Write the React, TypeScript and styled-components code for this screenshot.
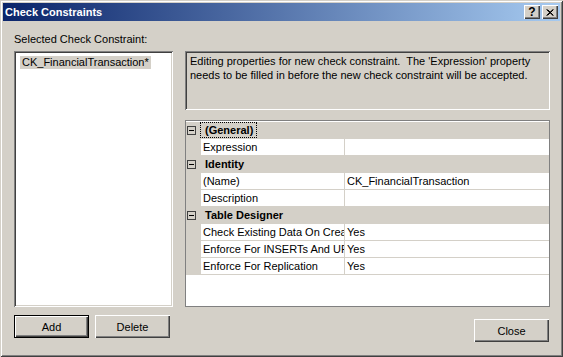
import React from "react";
import styled, { createGlobalStyle } from "styled-components";

const Global = createGlobalStyle`
  html, body { margin: 0; padding: 0; background: #D4D0C8; }
  body {
    font-family: "Liberation Sans", Arial, sans-serif;
    font-size: 11px;
    color: #000;
  }
  * { box-sizing: border-box; }
`;

const Window = styled.div`
  width: 563px;
  height: 357px;
  padding: 3px;
  background: #d4d0c8;
  display: flex;
  flex-direction: column;
  box-shadow: inset 1px 1px 0 #d4d0c8, inset -1px -1px 0 #404040,
    inset 2px 2px 0 #ffffff, inset -2px -2px 0 #808080;
`;

const TitleBar = styled.div`
  height: 18px;
  display: flex;
  align-items: center;
  padding: 0 2px 0 2px;
  background: linear-gradient(to right, #0a246a 0%, #a6caf0 100%);
`;

const TitleText = styled.div`
  flex: 1;
  color: #fff;
  font-weight: bold;
  font-size: 11px;
  line-height: 18px;
`;

const CaptionButtons = styled.div`
  display: flex;
  gap: 2px;
`;

const CaptionButton = styled.div`
  width: 16px;
  height: 14px;
  background: #d4d0c8;
  display: flex;
  align-items: center;
  justify-content: center;
  font-weight: bold;
  font-size: 12px;
  line-height: 14px;
  box-shadow: inset 1px 1px 0 #ffffff, inset -1px -1px 0 #404040,
    inset -2px -2px 0 #808080;
`;

const Body = styled.div`
  flex: 1;
  display: flex;
  padding-left: 11px;
`;

const LeftCol = styled.div`
  width: 159px;
  display: flex;
  flex-direction: column;
`;

const Label = styled.div`
  margin-top: 12px;
  line-height: 13px;
  padding-left: 0;
`;

const sunken = `
  box-shadow: inset 1px 1px 0 #808080, inset -1px -1px 0 #ffffff,
    inset 2px 2px 0 #404040, inset -2px -2px 0 #d4d0c8;
`;

const ListBox = styled.div`
  margin-top: 5px;
  height: 256px;
  background: #fff;
  padding: 5px 4px 0 6px;
  ${sunken}
`;

const ListItem = styled.span<{ $selected?: boolean }>`
  display: inline-block;
  line-height: 13px;
  padding: 0 2px;
  background: ${(p) => (p.$selected ? "#d4d0c8" : "transparent")};
`;

const ButtonRow = styled.div`
  margin-top: 8px;
  display: flex;
  gap: 6px;
`;

const Button = styled.button<{ $default?: boolean }>`
  width: 75px;
  height: 23px;
  border: none;
  padding: 0;
  background: #d4d0c8;
  font-family: "Liberation Sans", Arial, sans-serif;
  font-size: 11px;
  color: #000;
  box-shadow: ${(p) =>
    p.$default
      ? "inset 0 0 0 1px #000, inset 2px 2px 0 #ffffff, inset -2px -2px 0 #404040, inset -3px -3px 0 #808080"
      : "inset 1px 1px 0 #ffffff, inset -1px -1px 0 #404040, inset -2px -2px 0 #808080"};
`;

const RightCol = styled.div`
  margin-left: 12px;
  width: 365px;
  display: flex;
  flex-direction: column;
  padding-top: 30px;
`;

const Description = styled.div`
  height: 59px;
  padding: 3px 5px;
  line-height: 14px;
  background: #d4d0c8;
  ${sunken}
`;

const Grid = styled.div`
  margin-top: 10px;
  height: 187px;
  border: 1px solid #808080;
  background: #fff;
  padding-top: 1px;
  display: flex;
  flex-direction: column;
`;

const CategoryRow = styled.div`
  height: 17px;
  display: flex;
  align-items: center;
  background: #d4d0c8;
  border-bottom: 1px solid #d4d0c8;
`;

const Expander = styled.div`
  width: 14px;
  height: 16px;
  display: flex;
  align-items: center;
  padding-left: 1px;
`;

const ExpandBox = styled.div`
  width: 9px;
  height: 9px;
  border: 1px solid #404040;
  display: flex;
  align-items: center;
  justify-content: center;
  &::after {
    content: "";
    width: 5px;
    height: 1px;
    background: #000;
  }
`;

const CategoryLabel = styled.span<{ $focused?: boolean }>`
  height: 16px;
  line-height: 14px;
  font-weight: bold;
  padding: 0 3px 0 4px;
  border: 1px dotted ${(p) => (p.$focused ? "#000" : "transparent")};
`;

const ItemRow = styled.div`
  height: 17px;
  display: flex;
  border-bottom: 1px solid #d4d0c8;
`;

const Margin = styled.div`
  width: 15px;
  background: #d4d0c8;
`;

const NameCell = styled.div`
  width: 143px;
  padding-left: 2px;
  line-height: 16px;
  white-space: nowrap;
  overflow: hidden;
  border-right: 1px solid #d4d0c8;
  width: 144px;
`;

const ValueCell = styled.div`
  flex: 1;
  padding-left: 2px;
  line-height: 16px;
  white-space: nowrap;
  overflow: hidden;
`;

const CloseRow = styled.div`
  margin-top: 12px;
  display: flex;
  justify-content: flex-end;
  padding-right: 1px;
`;

type Prop = { name: string; value: string };
type Category = { title: string; focused?: boolean; items: Prop[] };

const categories: Category[] = [
  { title: "(General)", focused: true, items: [{ name: "Expression", value: "" }] },
  {
    title: "Identity",
    items: [
      { name: "(Name)", value: "CK_FinancialTransaction" },
      { name: "Description", value: "" },
    ],
  },
  {
    title: "Table Designer",
    items: [
      { name: "Check Existing Data On Creation Or Re-Enabling", value: "Yes" },
      { name: "Enforce For INSERTs And UPDATEs", value: "Yes" },
      { name: "Enforce For Replication", value: "Yes" },
    ],
  },
];

export default function App() {
  return (
    <>
      <Global />
      <Window>
        <TitleBar>
          <TitleText>Check Constraints</TitleText>
          <CaptionButtons>
            <CaptionButton>?</CaptionButton>
            <CaptionButton>
              <svg width="8" height="7" viewBox="0 0 8 7">
                <path d="M0.5 0.5 L7 6.5 M1.5 0.5 L7.5 6.5 M7 0.5 L0.5 6.5 M7.5 0.5 L1.5 6.5" stroke="#000" strokeWidth="1" fill="none" />
              </svg>
            </CaptionButton>
          </CaptionButtons>
        </TitleBar>
        <Body>
          <LeftCol>
            <Label>Selected Check Constraint:</Label>
            <ListBox>
              <ListItem $selected>CK_FinancialTransaction*</ListItem>
            </ListBox>
            <ButtonRow>
              <Button $default>Add</Button>
              <Button>Delete</Button>
            </ButtonRow>
          </LeftCol>
          <RightCol>
            <Description>
              Editing properties for new check constraint.&nbsp; The 'Expression' property
              needs to be filled in before the new check constraint will be accepted.
            </Description>
            <Grid>
              {categories.map((c) => (
                <React.Fragment key={c.title}>
                  <CategoryRow>
                    <Expander>
                      <ExpandBox />
                    </Expander>
                    <CategoryLabel $focused={c.focused}>{c.title}</CategoryLabel>
                  </CategoryRow>
                  {c.items.map((it) => (
                    <ItemRow key={it.name}>
                      <Margin />
                      <NameCell>{it.name}</NameCell>
                      <ValueCell>{it.value}</ValueCell>
                    </ItemRow>
                  ))}
                </React.Fragment>
              ))}
            </Grid>
            <CloseRow>
              <Button>Close</Button>
            </CloseRow>
          </RightCol>
        </Body>
      </Window>
    </>
  );
}
